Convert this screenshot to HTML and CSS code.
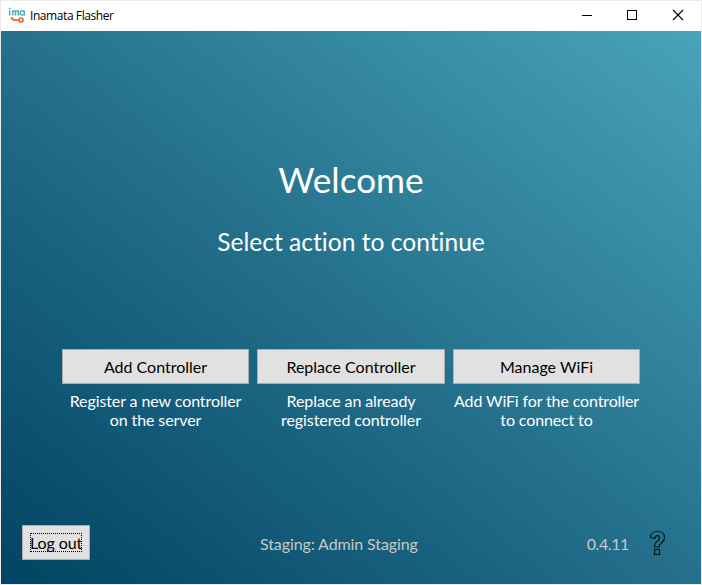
FILE: index.html
```html
<!DOCTYPE html>
<html lang="en">
<head>
<meta charset="utf-8">
<title>Inamata Flasher</title>
<link rel="stylesheet" href="styles.css">
</head>
<body>
<div class="window">
  <header class="titlebar">
    <svg class="logo" width="18" height="18" viewBox="0 0 18 18" fill="none">
      <g stroke="#55a9bd" stroke-width="1.5">
        <path d="M1.7 3.5V8.5M4.7 8.5V4H10.3V8.5M7.5 4V8.5M16.2 3.3V8.5M16 4.1H13.2Q12.2 4.1 12.2 6T13.2 7.8H16"/>
        <path d="M1 1.5H2.5"/>
      </g>
      <path d="M3.3 10Q4 13.1 7 13.1H10.8" stroke="#e5702e" stroke-width="1.7"/>
      <circle cx="13" cy="13" r="2" stroke="#e5702e" stroke-width="1.7"/>
    </svg>
    <span class="title">Inamata Flasher</span>
    <svg class="controls" width="138" height="30" viewBox="0 0 138 30" fill="none" stroke="#000">
      <path d="M19 14.5H29"/>
      <rect x="64.5" y="9.5" width="9" height="9"/>
      <path d="M110 9L120 19M120 9L110 19" stroke-width="1.1"/>
    </svg>
  </header>
  <main class="content">
    <h1>Welcome</h1>
    <h2>Select action to continue</h2>
    <div class="actions">
      <section><button>Add Controller</button><p>Register a new controller<br>on the server</p></section>
      <section><button>Replace Controller</button><p>Replace an already<br>registered controller</p></section>
      <section><button>Manage WiFi</button><p class="wide">Add WiFi for the controller<br>to connect to</p></section>
    </div>
    <footer>
      <button class="logout"><span>Log out</span></button>
      <span class="account">Staging: Admin Staging</span>
      <span class="version">0.4.11</span>
      <svg class="help" width="18" height="26" viewBox="0 0 18 26" fill="none" stroke="#06161c" stroke-width="1.2">
        <path d="M1.5 7.5C1.5 3.5 4.5 1.5 8.5 1.5C13 1.5 15.5 4 15.5 7.5C15.5 10.5 14 12 12 13.4C10.5 14.5 10 15.2 10 17H5.5C5.5 13.5 6.5 12.3 8.5 11C10 10 10.5 9.2 10.5 7.9C10.5 6.5 9.5 5.7 8.5 5.7C7 5.7 6.2 6.5 6 8.2Z"/>
        <rect x="5.5" y="19.5" width="5" height="5"/>
      </svg>
    </footer>
  </main>
</div>
</body>
</html>
```
FILE: styles.css
```css
* { box-sizing: border-box; }
body { margin: 0; background: #fff; font-family: Lato, sans-serif; font-size: 16px; line-height: 19px; font-variant-ligatures: none; }
.window { width: 702px; height: 585px; border: 1px solid #ebebeb; display: flex; flex-direction: column; }
.titlebar { height: 30px; flex: none; display: flex; align-items: center; padding-left: 7px; background: #fff; }
.logo { margin-right: 4px; }
.title { font: 12px/16px "Open Sans", sans-serif; letter-spacing: -0.42px; color: #000; }
.controls { margin-left: auto; }
.content { flex: 1; display: flex; flex-direction: column; color: #fff; background: linear-gradient(to top right, #004463 0%, #226d89 46.5%, #49a3b9 100%); }
h1, h2, p { margin: 0; font-weight: 400; text-align: center; }
h1 { margin-top: 126px; font-size: 35.2px; line-height: 44px; }
h2 { margin-top: 26px; font-size: 24.6px; line-height: 30px; }
.actions { display: grid; grid-template-columns: 187px 188px 187px; column-gap: 8px; margin: 92px 0 0 61px; }
button { display: block; width: 100%; height: 35px; padding: 0; border: 1px solid #adadad; border-radius: 0; background: #e1e1e1; color: #000; font: inherit; font-variant-ligatures: none; }
.actions p { margin-top: 7px; white-space: nowrap; letter-spacing: -0.09px; }
.actions .wide { letter-spacing: -0.13px; }
footer { display: grid; grid-template-columns: 68px 1fr auto 18px; align-items: center; height: 36px; margin: auto 35px 23px 21px; color: #c8c8c8; }
.logout { align-self: start; }
.logout span { display: inline-block; width: 52px; outline: 1px dotted #000; outline-offset: -1px; white-space: nowrap; letter-spacing: -0.1px; }
.account { margin-left: 170px; letter-spacing: -0.1px; }
.version { margin-right: 19px; letter-spacing: -0.4px; }
.help { margin-left: 1px; }
```
